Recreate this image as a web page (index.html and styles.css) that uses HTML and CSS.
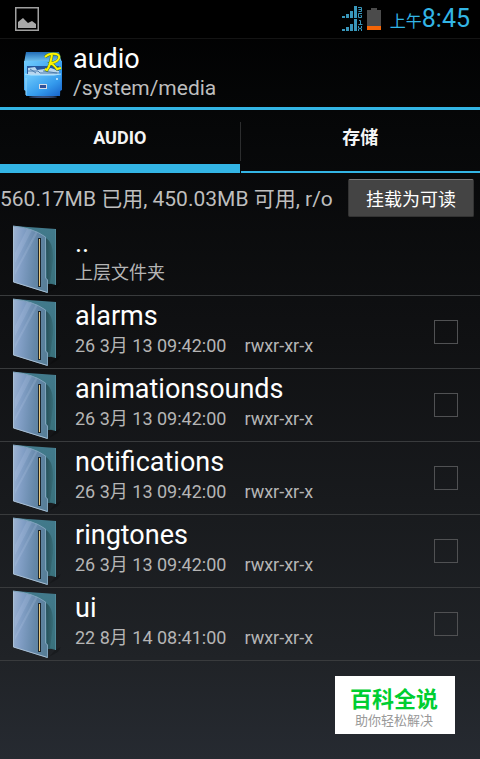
FILE: index.html
```
<!DOCTYPE html>
<html lang="zh-CN">
<head>
  <meta charset="UTF-8">
  <meta name="viewport" content="width=device-width, initial-scale=1.0">
  <title>audio</title>
  <link rel="stylesheet" href="styles.css">
</head>
<body>
  <!-- Shared shapes -->
  <svg class="defs" width="0" height="0" aria-hidden="true">
    <defs>
      <linearGradient id="front" x1="0" y1="0" x2="1" y2="0.15">
        <stop offset="0" stop-color="#9fb4d2"/>
        <stop offset="0.3" stop-color="#829fc6"/>
        <stop offset="0.7" stop-color="#6487a8"/>
        <stop offset="1" stop-color="#587f99"/>
      </linearGradient>
      <linearGradient id="back" x1="0" y1="0" x2="0" y2="1">
        <stop offset="0" stop-color="#427a8c"/>
        <stop offset="1" stop-color="#39717c"/>
      </linearGradient>
      <linearGradient id="shade" x1="0" y1="0" x2="1" y2="0">
        <stop offset="0" stop-color="#284f59"/>
        <stop offset="1" stop-color="#39717c"/>
      </linearGradient>
      <symbol id="folder" viewBox="0 0 50 70">
        <path d="M42 60 L48 57 L45 62 L36 67 Z" fill="#000" opacity="0.2"/>
        <path d="M1 1 L43 4 V60 L30 57 V14 Z" fill="url(#back)"/>
        <path d="M33 13 Q41 18 40 36 L37 58 L41 59 H34 Z" fill="url(#shade)"/>
        <path d="M42.5 4 V60" stroke="#518999" fill="none"/>
        <path d="M0 1 Q20 3 33 12 V53 L35 55 V68 L0 57 Z" fill="url(#front)"/>
        <path d="M2 28 L14 4 L19 5 L2 38 Z M2 46 L23 6 L25 7 L2 50 Z" fill="#c4d4ec" opacity="0.18"/>
        <path d="M0.5 1 V57 L34.5 67.5" stroke="#a9bfd3" fill="none"/>
        <path d="M0 1 Q20 3 32.5 12 V53 L34.5 55 V67" stroke="#7fa3bc" fill="none"/>
        <path d="M25 13h3v49h-3z" fill="#1d262c"/>
        <path d="M26 14h1v47h-1z" fill="#ebcb80"/>
      </symbol>
    </defs>
  </svg>

  <div class="status-bar">
    <svg class="status-picture" width="24" height="24" viewBox="0 0 24 24" aria-hidden="true">
      <rect x="0.75" y="0.75" width="22.5" height="22.5" fill="none" stroke="#a0a0a0" stroke-width="1.5"/>
      <path d="M3 21 V15 L8 11 L13 16 L17 14 L21 17 V21 Z" fill="#a8a8a8"/>
    </svg>
    <div class="status-right">
      <svg width="21" height="26" viewBox="0 0 21 26" aria-hidden="true">
        <path d="M0 10h3v2h-3z M4 8h3v4h-3z M8 5h3v7h-3z M12 0h3v12h-3z M0 23h3v2h-3z M4 21h3v4h-3z M8 18h3v7h-3z M12 13h3v12h-3z" fill="#3996ba"/>
        <path d="M16 1.5h3.5v4h-3M19.500 3.500h-3M20 7.500h-3.500v4h3v-2h-1M17 14.500h1.500v4M16.500 18.500h4M16.500 20v2l3 1v2M19.500 20v2l-3 1v2" fill="none" stroke="#3996ba"/>
      </svg>
      <svg class="battery" width="14" height="22" viewBox="0 0 14 22" aria-hidden="true">
        <path d="M4 0h6v2h4v20h-14v-20h4z" fill="#4b4b4b"/>
        <path d="M0 18h14v4h-14z" fill="#f46507"/>
      </svg>
      <div class="clock"><span class="ampm">上午</span>8:45</div>
    </div>
  </div>

  <header class="header">
    <svg class="app-icon" width="40" height="48" viewBox="0 0 40 48" aria-hidden="true">
      <defs>
        <linearGradient id="cabinet" x1="0" y1="0" x2="1" y2="1">
          <stop offset="0" stop-color="#72cdfd"/>
          <stop offset="0.6" stop-color="#359bed"/>
          <stop offset="1" stop-color="#1763cb"/>
        </linearGradient>
        <linearGradient id="top" x1="0" y1="0" x2="0" y2="1">
          <stop offset="0" stop-color="#226cb6"/>
          <stop offset="1" stop-color="#7cd1fa"/>
        </linearGradient>
      </defs>
      <ellipse cx="20" cy="46" rx="14" ry="1" fill="#365080"/>
      <path d="M3 1H36L39 12H1Z" fill="url(#top)"/>
      <path d="M1 10H39V39L37 40V45H3V40L1 39Z" fill="url(#cabinet)"/>
      <path d="M4 15H36V25H4Z" fill="#24569c"/>
      <path d="M5 17L12 16L14 19L28 17L36 20V24H5Z" fill="#b9d6ee"/>
      <path d="M5 20H15L17 22H36M7 18L13 22M20 20L34 22" fill="none" stroke="#4e7fb0"/>
      <path d="M2 23L8 24H31L38 23L37 45H3Z" fill="url(#cabinet)"/>
      <path d="M2 23L8 24H31L38 23" fill="none" stroke="#abe3ff"/>
      <path d="M3 27V44" stroke="#91d7ff"/>
      <rect x="16.500" y="33.500" width="7" height="4" fill="#315098" stroke="#d6dce6"/>
      <circle cx="34" cy="28" r="1" fill="#d6f0ff"/>
      <path d="M22 6Q26 2 33 3Q37 4 36 7Q35 11 28 12Q32 15 34 18L38 17M29 4Q27 15 24 19L22 18" fill="none" stroke="#43772b" stroke-width="3"/>
      <path d="M22 6Q26 2 33 3Q37 4 36 7Q35 11 28 12Q32 15 34 18L38 17M29 4Q27 15 24 19L22 18" fill="none" stroke="#fff500" stroke-width="2"/>
    </svg>
    <div>
      <h1 class="title">audio</h1>
      <div class="path">/system/media</div>
    </div>
  </header>

  <nav class="tabs">
    <button class="tab active" type="button">AUDIO</button>
    <div class="tab-divider"></div>
    <button class="tab" type="button">存储</button>
  </nav>

  <div class="mount-bar">
    <div class="usage">560.17MB 已用, 450.03MB 可用, r/o</div>
    <button class="mount-button" type="button">挂载为可读</button>
  </div>

  <main class="files">
    <div class="file">
      <svg class="folder" aria-hidden="true"><use href="#folder"/></svg>
      <div class="file-text">
        <div class="name">..</div>
        <div class="details">上层文件夹</div>
      </div>
    </div>
    <div class="file">
      <svg class="folder" aria-hidden="true"><use href="#folder"/></svg>
      <div class="file-text">
        <label class="name" for="alarms">alarms</label>
        <div class="details"><span>26 3月 13 09:42:00</span><span>rwxr-xr-x</span></div>
      </div>
      <input class="check" type="checkbox" id="alarms">
    </div>
    <div class="file">
      <svg class="folder" aria-hidden="true"><use href="#folder"/></svg>
      <div class="file-text">
        <label class="name" for="animationsounds">animationsounds</label>
        <div class="details"><span>26 3月 13 09:42:00</span><span>rwxr-xr-x</span></div>
      </div>
      <input class="check" type="checkbox" id="animationsounds">
    </div>
    <div class="file">
      <svg class="folder" aria-hidden="true"><use href="#folder"/></svg>
      <div class="file-text">
        <label class="name" for="notifications">notifications</label>
        <div class="details"><span>26 3月 13 09:42:00</span><span>rwxr-xr-x</span></div>
      </div>
      <input class="check" type="checkbox" id="notifications">
    </div>
    <div class="file">
      <svg class="folder" aria-hidden="true"><use href="#folder"/></svg>
      <div class="file-text">
        <label class="name" for="ringtones">ringtones</label>
        <div class="details"><span>26 3月 13 09:42:00</span><span>rwxr-xr-x</span></div>
      </div>
      <input class="check" type="checkbox" id="ringtones">
    </div>
    <div class="file">
      <svg class="folder" aria-hidden="true"><use href="#folder"/></svg>
      <div class="file-text">
        <label class="name" for="ui">ui</label>
        <div class="details"><span>22 8月 14 08:41:00</span><span>rwxr-xr-x</span></div>
      </div>
      <input class="check" type="checkbox" id="ui">
    </div>
  </main>

  <footer class="footer">
    <div class="badge">
      <div class="badge-title">百科全说</div>
      <div class="badge-text">助你轻松解决</div>
    </div>
  </footer>
</body>
</html>
```
FILE: styles.css
```
* {
  box-sizing: border-box;
}

body {
  margin: 0;
  min-height: 100vh;
  background: linear-gradient(#000 0, #050607 110px, #101113 340px, #202327 660px, #262a31 100%);
  color: #fff;
  font-family: Roboto, "Noto Sans CJK SC", sans-serif;
}

.defs {
  display: block;
}

/* Status bar */
.status-bar {
  display: flex;
  justify-content: space-between;
  align-items: center;
  height: 39px;
  padding: 0 10px 0 15px;
  background: #000;
  border-bottom: 1px solid #141414;
}

.status-right {
  display: flex;
  align-items: center;
  gap: 4px;
}

.clock {
  margin-left: 5px;
  padding-top: 2px;
  color: #33b5e5;
  font-size: 25px;
  line-height: 36px;
}

.ampm {
  font-size: 16px;
}

/* Header */
.header {
  display: flex;
  align-items: center;
  gap: 10px;
  height: 71px;
  padding: 0 0 2px 23px;
  border-bottom: 3px solid #33b5e5;
}

.app-icon {
  margin-top: 6px;
}

.title {
  margin: 0;
  font-size: 27px;
  font-weight: 400;
  line-height: 32px;
}

.path {
  color: #bebebe;
  font-size: 21px;
  line-height: 26px;
}

/* Tabs */
.tabs {
  display: flex;
  height: 63px;
}

.tab {
  flex: 1;
  padding: 2px 0 7px;
  border: 0;
  border-bottom: 2px solid #33b5e5;
  background: none;
  color: #f5f5f5;
  font-family: inherit;
  font-size: 18px;
  font-weight: 700;
  line-height: 24px;
}

.tab.active {
  border-bottom-width: 9px;
  padding-bottom: 0;
}

.tab-divider {
  width: 1px;
  height: 39px;
  margin-top: 12px;
  background: #2c2d2e;
}

/* Storage usage */
.mount-bar {
  display: flex;
  justify-content: space-between;
  align-items: center;
  height: 50px;
  padding-right: 6px;
}

.usage {
  padding-top: 2px;
  color: #bebebe;
  font-size: 21px;
  line-height: 28px;
  white-space: nowrap;
}

.mount-button {
  width: 126px;
  height: 38px;
  padding: 0;
  border: 1px solid #333;
  border-top-color: #777;
  border-radius: 2px;
  background: #444;
  color: #fff;
  font-family: inherit;
  font-size: 18px;
}

/* File list */
.file {
  display: flex;
  align-items: center;
  height: 73px;
  padding: 0 22px 0 13px;
  border-bottom: 1px solid #393b3d;
}

.folder {
  width: 50px;
  height: 70px;
  margin: 2px 12px 0 0;
}

.file-text {
  flex: 1;
  padding-bottom: 4px;
}

.name {
  display: block;
  font-size: 27px;
  line-height: 32px;
}

.details {
  display: flex;
  gap: 18px;
  color: #b5b5b5;
  font-size: 18px;
  line-height: 28px;
}

.check {
  appearance: none;
  width: 24px;
  height: 24px;
  margin: 0;
  border: 1px solid #505153;
}

.check:checked {
  background: #33b5e5;
}

/* Badge */
.footer {
  display: flex;
  justify-content: flex-end;
  padding: 15px 25px 25px;
}

.badge {
  width: 120px;
  height: 58px;
  padding: 10px 2px 0 0;
  background: #fff;
  text-align: center;
}

.badge-title {
  color: #00ce31;
  font-size: 22px;
  font-weight: 700;
  line-height: 28px;
}

.badge-text {
  color: #999;
  font-size: 13px;
  line-height: 14px;
}
```
